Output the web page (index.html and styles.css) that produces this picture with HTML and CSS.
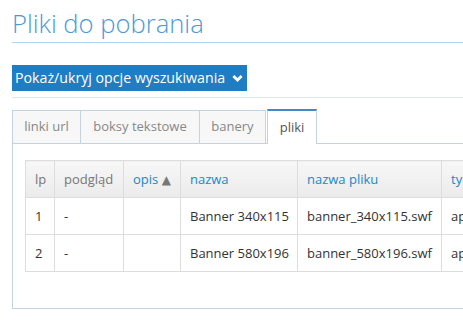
FILE: index.html
```html
<!DOCTYPE html>
<html lang="pl">
<head>
<meta charset="utf-8">
<link rel="stylesheet" href="styles.css">
</head>
<body>
<div class="page">
  <h1 class="title">Pliki do pobrania</h1>
  <div class="toggle-row">
    <button class="toggle"><span class="toggle-text">Pokaż/ukryj opcje wyszukiwania</span><svg class="chev" width="11" height="9" viewBox="0 0 11 9"><path d="M1.4 2 L5.5 6.1 L9.6 2" fill="none" stroke="#fff" stroke-width="2.8"/></svg></button>
  </div>
  <ul class="tabs">
    <li class="tab t1">linki url</li>
    <li class="tab t2">boksy tekstowe</li>
    <li class="tab t3">banery</li>
    <li class="tab t4 active">pliki</li>
  </ul>
  <div class="panel">
    <table class="grid">
      <colgroup>
        <col class="w-lp"><col class="w-pod"><col class="w-opis"><col class="w-naz"><col class="w-plik"><col class="w-typ">
      </colgroup>
      <thead>
        <tr>
          <th>lp</th>
          <th>podgląd</th>
          <th class="sort">opis <span class="arrow">▲</span></th>
          <th class="sort">nazwa</th>
          <th class="sort">nazwa pliku</th>
          <th class="sort">typ</th>
        </tr>
      </thead>
      <tbody>
        <tr>
          <td>1</td><td>-</td><td></td><td>Banner 340x115</td><td>banner_340x115.swf</td><td>application/x-shockwave-flash</td>
        </tr>
        <tr>
          <td>2</td><td>-</td><td></td><td>Banner 580x196</td><td>banner_580x196.swf</td><td>application/x-shockwave-flash</td>
        </tr>
      </tbody>
    </table>
  </div>
</div>
</body>
</html>
```
FILE: styles.css
```css
html, body {
  margin: 0;
  padding: 0;
  background: #fff;
  overflow: hidden;
}
body {
  font-family: "Open Sans", "DejaVu Sans", sans-serif;
  color: #333;
}
.page {
  padding: 0 0 0 12px;
  width: 800px;
}
.title {
  margin: 0;
  padding-top: 7px;
  font-weight: 300;
  font-size: 25.6px;
  line-height: 34px;
  color: #4a9ad9;
  border-bottom: 1px solid #b5d4ee;
  height: 35px;
  box-sizing: content-box;
}
.toggle-row {
  margin-top: 22px;
  padding-bottom: 6px;
  border-bottom: 1px solid #dde6ef;
}
.toggle {
  display: flex;
  align-items: center;
  gap: 7px;
  height: 26px;
  padding: 0 4px 0 3px;
  border: 0;
  background: #1f7dc3;
  color: #fff;
  font-family: "Open Sans", sans-serif;
  font-size: 14.2px;
  line-height: 26px;
  white-space: nowrap;
}
.toggle-text { white-space: nowrap; }
.chev { display: block; margin-top: 1px; }
.tabs {
  list-style: none;
  margin: 12px 0 0;
  padding: 0;
  display: flex;
  border-bottom: 1px solid #c5d3e1;
  height: 33px;
}
.tab {
  box-sizing: border-box;
  height: 33px;
  padding: 0;
  text-align: center;
  line-height: 31px;
  font-size: 13px;
  color: #888;
  background: #f7f7f7;
  border: 1px solid #c5d3e1;
  border-bottom: 0;
  border-right: 0;
}
.t1 { width: 68px; }
.t2 { width: 119px; }
.t3 { width: 67px; border-right: 1px solid #c5d3e1; }
.t4 { width: 50px; }
.tab.active {
  background: #fff;
  color: #555;
  border-top: 2px solid #3f8bc9;
  border-left: 1px solid #c5d3e1;
  border-right: 1px solid #c5d3e1;
  margin-left: 1px;
  height: 35px;
  margin-top: -2px;
  line-height: 33px;
  position: relative;
  top: 1px;
}
.panel {
  border-left: 1px solid #c5d3e1;
  border-bottom: 1px solid #c5d3e1;
  padding: 16px 0 36px 12px;
}
.grid {
  border-collapse: collapse;
  table-layout: fixed;
  width: 720px;
  font-size: 13px;
}
.w-lp { width: 29px; }
.w-pod { width: 69px; }
.w-opis { width: 57px; }
.w-naz { width: 117px; }
.w-plik { width: 144px; }
.w-typ { width: 304px; }
.grid th, .grid td {
  border: 1px solid #ddd;
  height: 36px;
  padding: 0 9px;
  text-align: left;
  white-space: nowrap;
  overflow: hidden;
}
.grid th {
  font-weight: 400;
  color: #777;
  background: linear-gradient(#f7f7f7, #ebebeb);
}
.grid th.sort { color: #1a87cc; }
.arrow { color: #777; font-size: 12px; }
.grid td { color: #333; }
```
